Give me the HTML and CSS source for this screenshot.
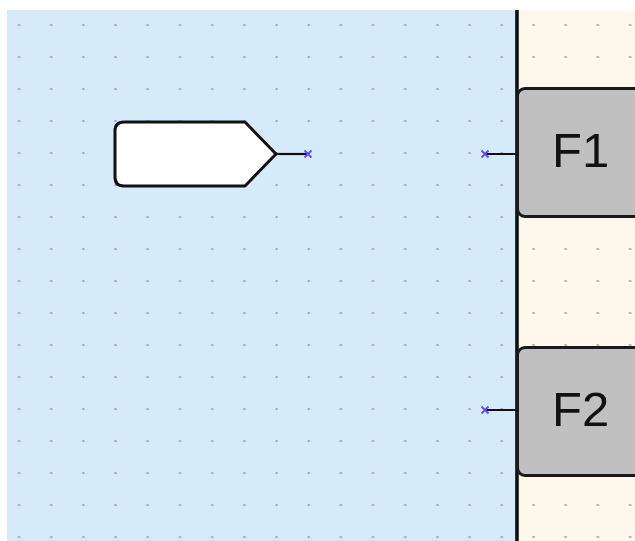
FILE: index.html
```html
<!DOCTYPE html>
<html lang="en">
<head>
<meta charset="utf-8">
<title>Diagram editor</title>
<link rel="stylesheet" href="styles.css">
</head>
<body>
<div class="editor">
  <div class="panel panel-left"></div>
  <div class="divider"></div>
  <div class="panel panel-right"></div>

  <svg class="wires" width="635" height="541" viewBox="0 0 635 541" aria-hidden="true">
    <path class="io-shape" d="M124 122 H245 L276 154 L245 186 H124 Q115 186 115 177 V131 Q115 122 124 122 Z"/>
    <line class="wire" x1="276" y1="154" x2="308" y2="154"/>
    <line class="wire" x1="485" y1="154" x2="518" y2="154"/>
    <line class="wire" x1="485" y1="410" x2="518" y2="410"/>
    <g class="port">
      <path d="M304.5 150.5 L311.5 157.5 M311.5 150.5 L304.5 157.5"/>
      <path d="M481.5 150.5 L488.5 157.5 M488.5 150.5 L481.5 157.5"/>
      <path d="M481.5 406.5 L488.5 413.5 M488.5 406.5 L481.5 413.5"/>
    </g>
  </svg>

  <div class="block block-f1"><span class="block-label">F1</span></div>
  <div class="block block-f2"><span class="block-label">F2</span></div>
</div>
</body>
</html>
```

FILE: styles.css
```css
html, body {
  margin: 0;
  padding: 0;
  background: #ffffff;
  overflow: hidden;
}

.editor {
  position: relative;
  width: 635px;
  height: 541px;
  box-sizing: border-box;
  padding: 10px 0 0 7px;
  display: flex;
  font-family: "Liberation Sans", Arial, sans-serif;
}

.panel {
  height: 100%;
  background-repeat: repeat;
}

.panel-left {
  width: 508px;
  background-color: #d6ebf9;
  background-image: radial-gradient(circle at 1.5px 1px, rgba(150,150,150,0.75) 0.9px, rgba(150,150,150,0) 1.6px);
  background-size: 32.2px 32px;
  background-position: 10.5px 14px;
}

.divider {
  width: 4px;
  height: 100%;
  background: linear-gradient(to right, #555 0, #111 1px, #111 3px, #777 4px);
}

.panel-right {
  flex: 1;
  background-color: #fef8ec;
  background-image: radial-gradient(circle at 1.5px 1px, rgba(150,150,150,0.75) 0.9px, rgba(150,150,150,0) 1.6px);
  background-size: 32.2px 32px;
  background-position: 13px 14px;
}

.wires {
  position: absolute;
  left: 0;
  top: 0;
}

.io-shape {
  fill: #ffffff;
  stroke: #111111;
  stroke-width: 3;
  stroke-linejoin: round;
}

.wire {
  stroke: #111111;
  stroke-width: 2.2;
}

.port path {
  stroke: #5a4cff;
  stroke-width: 1.8;
  fill: none;
}

.block {
  position: absolute;
  left: 516px;
  width: 130px;
  height: 131px;
  box-sizing: border-box;
  border: 3px solid #1a1a1a;
  border-radius: 9px;
  background: #c0c0c0;
  display: flex;
  align-items: center;
  padding-left: 33px;
}

.block-f1 { top: 87px; }
.block-f2 { top: 346px; }

.block-label {
  font-size: 49px;
  line-height: 1;
  color: #111111;
  margin-top: -4px;
}
```
